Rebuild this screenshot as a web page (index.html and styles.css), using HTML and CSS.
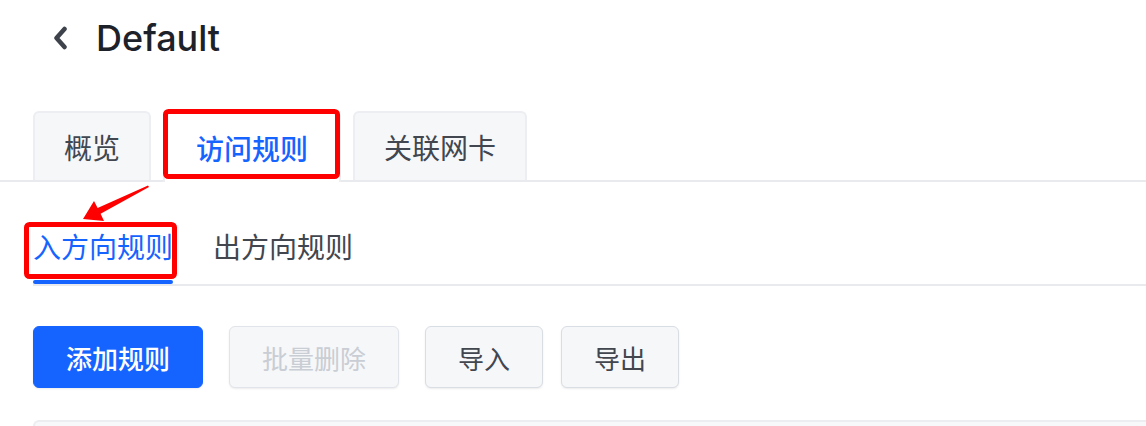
FILE: index.html
```html
<!DOCTYPE html>
<html lang="zh-CN">
<head>
  <meta charset="UTF-8" />
  <meta name="viewport" content="width=device-width, initial-scale=1.0"/>
  <title>Default | 访问规则</title>
  <link rel="stylesheet" href="styles.css">
</head>
<body>

  <div class="page-header">
    <a class="back" href="#">
      <svg width="16" height="24" viewBox="0 0 16 24">
        <path d="M12.5 3 L4.5 12 L12.5 21" fill="none" stroke="#3d424b" stroke-width="4.5" stroke-linecap="round" stroke-linejoin="round"/>
      </svg>
    </a>
    <h1>Default</h1>
  </div>

  <div class="tabs">
    <div class="tab">概览</div>
    <div class="tab active">访问规则</div>
    <div class="tab">关联网卡</div>
  </div>

  <div class="subtabs">
    <div class="subtab active">
      <span>入方向规则</span>
      <i class="bar"></i>
    </div>
    <div class="subtab">
      <span>出方向规则</span>
      <i class="bar"></i>
    </div>
  </div>

  <div class="toolbar">
    <button class="btn primary">添加规则</button>
    <button class="btn" disabled>批量删除</button>
    <button class="btn">导入</button>
    <button class="btn near">导出</button>
  </div>

  <div class="table-box"></div>

  <!-- annotations drawn over the screenshot -->
  <svg class="marks" width="1146" height="426" viewBox="0 0 1146 426">
    <rect x="165.5" y="111.5" width="172" height="65" rx="3" fill="none" stroke="#ff0000" stroke-width="5"/>
    <rect x="26.5" y="224.5" width="148" height="52" rx="3" fill="none" stroke="#ff0000" stroke-width="5"/>
    <polygon points="83,219 94,201 97.6,208 148,185.5 149,187 100.6,213.7 104,221" fill="#ff0000"/>
  </svg>

</body>
</html>
```

FILE: styles.css
```css
* {
  box-sizing: border-box;
}
body {
  margin: 0;
  width: 1146px;
  height: 426px;
  overflow: hidden;
  position: relative;
  font-family: 'Liberation Sans', 'Noto Sans CJK SC', sans-serif;
  background: #fff;
  color: #1d2129;
}

.page-header {
  display: flex;
  align-items: center;
  gap: 28px;
  height: 76px;
  padding-left: 52px;
}
.back {
  display: flex;
}
.page-header h1 {
  margin: 0;
  font-family: 'Inter', 'Liberation Sans', sans-serif;
  font-size: 36px;
  font-weight: 500;
  color: #1d2129;
}

.tabs {
  display: flex;
  align-items: flex-end;
  gap: 12px;
  margin-top: 35px;
  padding-left: 33px;
  border-bottom: 2px solid #e9eaee;
}
.tab {
  height: 69px;
  padding: 0 29px;
  display: flex;
  align-items: center;
  font-family: 'Noto Sans CJK SC', sans-serif;
  font-size: 28px;
  color: #41464f;
  background: #f6f7f9;
  border: 2px solid #eceef2;
  border-bottom: none;
  border-radius: 6px 6px 0 0;
}
.tab.active {
  height: 71px;
  margin-bottom: -2px;
  padding: 0 31px;
  background: #fff;
  color: #1664ff;
  font-weight: 500;
}

.subtabs {
  display: flex;
  gap: 40px;
  margin-left: 33px;
  padding-top: 44px;
  border-bottom: 2px solid #e9eaee;
}
.subtab {
  display: flex;
  flex-direction: column;
  font-family: 'Noto Sans CJK SC', sans-serif;
  font-size: 28px;
  line-height: 40px;
  color: #41464f;
}
.subtab .bar {
  height: 4px;
  margin-top: 14px;
  border-radius: 2px;
}
.subtab.active {
  color: #1664ff;
}
.subtab.active .bar {
  background: #1664ff;
}

.toolbar {
  display: flex;
  gap: 26px;
  margin-top: 40px;
  padding-left: 33px;
}
.btn {
  height: 62px;
  padding: 0 32px;
  font-family: 'Noto Sans CJK SC', sans-serif;
  font-size: 26px;
  color: #41464f;
  background: #f6f7f9;
  border: 1px solid #d9dde4;
  border-radius: 6px;
  box-shadow: 0 1px 2px rgba(0,0,0,0.08);
}
.btn.primary {
  background: #1664ff;
  border-color: #1664ff;
  color: #fff;
  font-weight: 500;
}
.btn:disabled {
  color: #c9cdd4;
  border-color: #e1e4ea;
}
.btn.near {
  margin-left: -8px;
}

.table-box {
  height: 6px;
  margin-top: 32px;
  margin-left: 33px;
  background: #f7f8fa;
  border-top: 2px solid #ebedf0;
  border-left: 2px solid #ebedf0;
  border-radius: 6px 0 0 0;
}

.marks {
  position: absolute;
  top: 0;
  left: 0;
  pointer-events: none;
}
```
